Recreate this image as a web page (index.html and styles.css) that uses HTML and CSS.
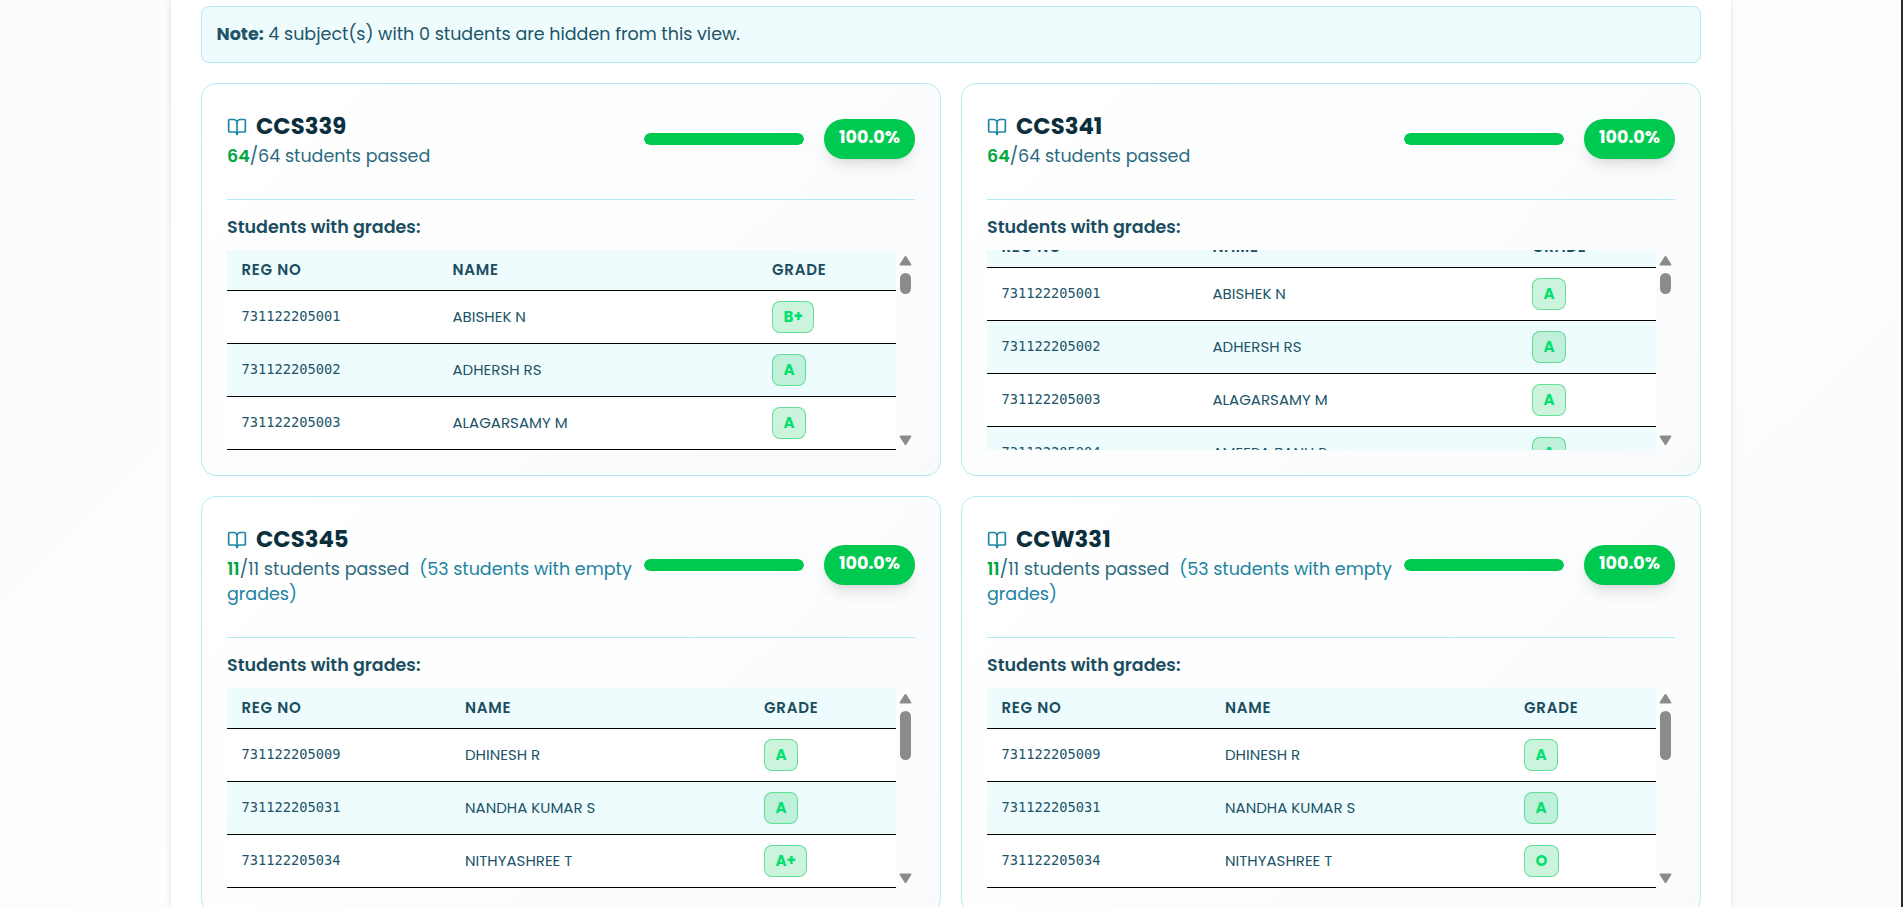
FILE: index.html
```html
<!DOCTYPE html>
<html lang="en">
<head>
<meta charset="UTF-8">
<meta name="viewport" content="width=device-width, initial-scale=1.0">
<link rel="stylesheet" href="styles.css">
<title>Subject Results</title>
</head>
<body>
<svg class="sprite">
    <symbol id="book" viewBox="0 0 24 24">
        <path d="M12 7v14"/>
        <path d="M3 18a1 1 0 0 1-1-1V4a1 1 0 0 1 1-1h5a4 4 0 0 1 4 4 4 4 0 0 1 4-4h5a1 1 0 0 1 1 1v13a1 1 0 0 1-1 1h-6a3 3 0 0 0-3 3 3 3 0 0 0-3-3z"/>
    </symbol>
    <symbol id="arrow" viewBox="0 0 13 10">
        <path d="M5.6.6.8 8a1 1 0 0 0 .9 1.600h9.600a1 1 0 0 0 .9-1.600L7.400.600a1.100 1.100 0 0 0-1.800 0z"/>
    </symbol>
</svg>
<main class="panel">
    <div class="note"><strong>Note:</strong> <span>4 subject(s) with 0 students are hidden from this view.</span></div>
    <div class="subjects" id="subjects"></div>
</main>
<script>
const subjects = [
    {
        code: "CCS339", passed: 64, total: 64, empty: 0, percent: 100, scroll: 0, thumb: 21, cols: "wide",
        students: [
            ["731122205001", "ABISHEK N", "B+"],
            ["731122205002", "ADHERSH RS", "A"],
            ["731122205003", "ALAGARSAMY M", "A"]
        ]
    },
    {
        code: "CCS341", passed: 64, total: 64, empty: 0, percent: 100, scroll: 23, thumb: 21, cols: "wide",
        students: [
            ["731122205001", "ABISHEK N", "A"],
            ["731122205002", "ADHERSH RS", "A"],
            ["731122205003", "ALAGARSAMY M", "A"],
            ["731122205004", "AMEERA BANU R", "A"]
        ]
    },
    {
        code: "CCS345", passed: 11, total: 11, empty: 53, percent: 100, scroll: 0, thumb: 49, cols: "narrow",
        students: [
            ["731122205009", "DHINESH R", "A"],
            ["731122205031", "NANDHA KUMAR S", "A"],
            ["731122205034", "NITHYASHREE T", "A+"]
        ]
    },
    {
        code: "CCW331", passed: 11, total: 11, empty: 53, percent: 100, scroll: 0, thumb: 49, cols: "narrow",
        students: [
            ["731122205009", "DHINESH R", "A"],
            ["731122205031", "NANDHA KUMAR S", "A"],
            ["731122205034", "NITHYASHREE T", "O"]
        ]
    }
];

const row = ([reg, name, grade]) => `
    <tr>
        <td class="reg">${reg}</td>
        <td>${name}</td>
        <td><span class="grade">${grade}</span></td>
    </tr>`;

const card = (s) => `
    <section class="card">
        <div class="card-header">
            <div class="info">
                <h3><svg class="icon"><use href="#book"/></svg>${s.code}</h3>
                <p><span class="passed">${s.passed}</span>/${s.total} students passed${s.empty ? `<span class="empty">(${s.empty} students with empty grades)</span>` : ""}</p>
            </div>
            <div class="progress"><div class="progress-fill" style="width: ${s.percent}%"></div></div>
            <div class="percent">${s.percent.toFixed(1)}%</div>
        </div>
        <h4>Students with grades:</h4>
        <div class="list">
            <div class="rows">
                <table class="${s.cols}">
                    <thead><tr><th>REG NO</th><th>NAME</th><th>GRADE</th></tr></thead>
                    <tbody>${s.students.map(row).join("")}</tbody>
                </table>
            </div>
            <div class="scrollbar">
                <svg class="arrow"><use href="#arrow"/></svg>
                <div class="thumb" style="height: ${s.thumb}px"></div>
                <svg class="arrow down"><use href="#arrow"/></svg>
            </div>
        </div>
    </section>`;

document.getElementById("subjects").innerHTML = subjects.map(card).join("");
document.querySelectorAll(".rows").forEach((el, i) => {
    el.scrollTop = subjects[i].scroll;
});
</script>
</body>
</html>
```
FILE: styles.css
```css
* {
    box-sizing: border-box;
}

html {
    background: #fcfcfd;
}

body {
    height: 100vh;
    margin: 0;
    padding: 0 170px 0 171px;
    overflow: hidden;
    border-right: 2px solid #2c2c2c;
    background: linear-gradient(135deg, #fbfbfd, #fdfefe 50%, #fbfbfb);
    font-family: "Poppins", "Inter", sans-serif;
    font-size: 17.5px;
    line-height: 25px;
    color: #205468;
}

.sprite {
    display: none;
}

.panel {
    height: 100vh;
    padding: 6px 30px 0;
    overflow: hidden;
    background: #ffffff;
    box-shadow: 0 0 6px rgba(0, 0, 0, 0.12);
}

.note {
    height: 57px;
    margin-bottom: 20px;
    padding: 15px 14.5px;
    border: 1px solid #b2ebf2;
    border-radius: 8px;
    background: #effcfd;
}

.subjects {
    display: grid;
    grid-template-columns: 1fr 1fr;
    gap: 20px;
}

.card {
    padding: 25px;
    border: 1px solid #b2ebf2;
    border-radius: 15px;
    background: linear-gradient(135deg, #ffffff, #fcfdfd 50%, #f9fafc);
}

.card-header {
    display: flex;
    align-items: center;
    padding-bottom: 30px;
    border-bottom: 1px solid #b2ebf2;
}

.info {
    flex: 1;
}

h3 {
    display: flex;
    align-items: center;
    gap: 9px;
    margin: 0;
    font-size: 22.75px;
    font-weight: 700;
    line-height: 35px;
    color: #0b2f3d;
}

.icon {
    width: 20px;
    height: 20px;
    fill: none;
    stroke: #1c86a4;
    stroke-width: 2;
    stroke-linecap: round;
    stroke-linejoin: round;
}

.info p {
    margin: 0;
    color: #2a6b80;
}

.passed {
    font-weight: 600;
    color: #00a63e;
}

.empty {
    margin-left: 10px;
    color: #1c83a1;
}

.progress {
    width: 160px;
    height: 12px;
    margin-right: 20px;
    overflow: hidden;
    border-radius: 6px;
    background: #e5e7eb;
}

.progress-fill {
    height: 100%;
    border-radius: 6px;
    background: #00c950;
}

.percent {
    width: 91px;
    height: 40px;
    padding-top: 6px;
    border-radius: 20px;
    background: #00c950;
    box-shadow: 0 10px 15px -3px rgba(0, 0, 0, 0.1), 0 4px 6px -4px rgba(0, 0, 0, 0.1);
    font-weight: 700;
    text-align: center;
    color: #ffffff;
}

h4 {
    margin: 15px 0 10px;
    font-size: 17.5px;
    font-weight: 600;
    color: #1b4d60;
}

.list {
    display: flex;
    height: 200px;
}

.rows {
    flex: 1;
    overflow: hidden;
}

table {
    width: 100%;
    table-layout: fixed;
    border-collapse: separate;
    border-spacing: 0;
    background: #ffffff;
    font-size: 15px;
    line-height: 22px;
}

th,
td {
    padding: 0 14.5px;
    border-bottom: 1px solid #000000;
    text-align: left;
    vertical-align: middle;
    white-space: nowrap;
}

th {
    height: 41px;
    background: #effcfd;
    font-weight: 600;
    letter-spacing: 0.75px;
    color: #1b4d60;
}

td {
    height: 53px;
}

tbody tr:nth-child(even) {
    background: #effcfd;
}

.wide th:nth-child(1) {
    width: 211px;
}

.wide th:nth-child(3) {
    width: 138.5px;
}

.narrow th:nth-child(1) {
    width: 223.5px;
}

.narrow th:nth-child(3) {
    width: 146.5px;
}

.reg {
    padding-bottom: 2px;
    font-family: "Consolas", "DejaVu Sans Mono", monospace;
    font-size: 13.7px;
}

.grade {
    display: block;
    width: fit-content;
    height: 32px;
    padding: 0 10.5px;
    border: 1px solid rgba(0, 201, 80, 0.5);
    border-radius: 8px;
    background: rgba(0, 201, 80, 0.2);
    font-weight: 700;
    line-height: 30px;
    color: #05df72;
}

.scrollbar {
    display: flex;
    flex-direction: column;
    align-items: center;
    width: 19px;
    padding: 6px 0 5px;
    background: #fcfcfc;
}

.arrow {
    width: 13px;
    height: 10px;
    fill: #8b8b8b;
}

.arrow.down {
    margin-top: auto;
    transform: rotate(180deg);
}

.thumb {
    width: 11px;
    margin-top: 7px;
    border-radius: 6px;
    background: #8b8b8b;
}
```
